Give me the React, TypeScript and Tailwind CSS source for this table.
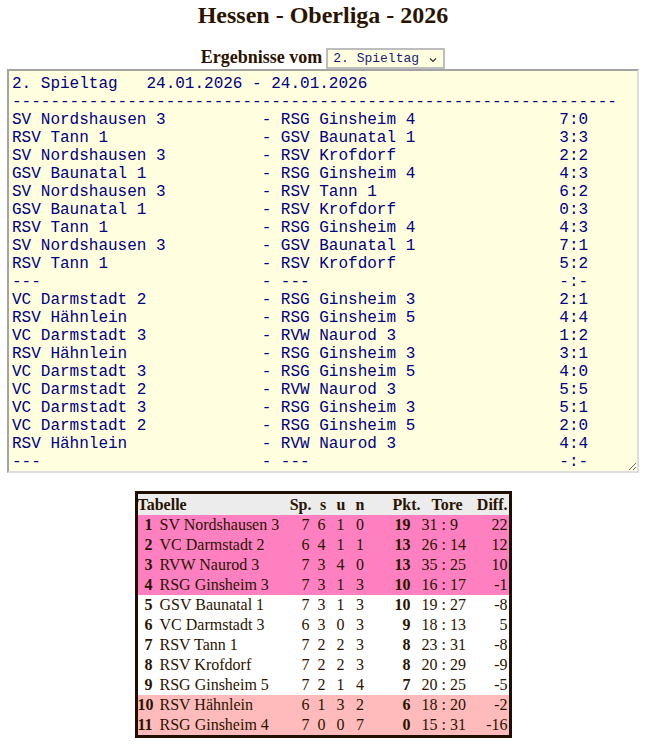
import React from "react";

const pad = (s: string, n: number) => s + " ".repeat(Math.max(0, n - s.length));

const matches: [string, string, string][] = [
  ["SV Nordshausen 3", "RSG Ginsheim 4", "7:0"],
  ["RSV Tann 1", "GSV Baunatal 1", "3:3"],
  ["SV Nordshausen 3", "RSV Krofdorf", "2:2"],
  ["GSV Baunatal 1", "RSG Ginsheim 4", "4:3"],
  ["SV Nordshausen 3", "RSV Tann 1", "6:2"],
  ["GSV Baunatal 1", "RSV Krofdorf", "0:3"],
  ["RSV Tann 1", "RSG Ginsheim 4", "4:3"],
  ["SV Nordshausen 3", "GSV Baunatal 1", "7:1"],
  ["RSV Tann 1", "RSV Krofdorf", "5:2"],
  ["---", "---", "-:-"],
  ["VC Darmstadt 2", "RSG Ginsheim 3", "2:1"],
  ["RSV Hähnlein", "RSG Ginsheim 5", "4:4"],
  ["VC Darmstadt 3", "RVW Naurod 3", "1:2"],
  ["RSV Hähnlein", "RSG Ginsheim 3", "3:1"],
  ["VC Darmstadt 3", "RSG Ginsheim 5", "4:0"],
  ["VC Darmstadt 2", "RVW Naurod 3", "5:5"],
  ["VC Darmstadt 3", "RSG Ginsheim 3", "5:1"],
  ["VC Darmstadt 2", "RSG Ginsheim 5", "2:0"],
  ["RSV Hähnlein", "RVW Naurod 3", "4:4"],
  ["---", "---", "-:-"],
];

const text = [
  "2. Spieltag   24.01.2026 - 24.01.2026",
  "-".repeat(63),
  ...matches.map(([a, b, c]) => pad(a, 26) + "- " + pad(b, 29) + c),
].join("\n");

type Row = [number, string, number, number, number, number, number, string, number, string];
const rows: Row[] = [
  [1, "SV Nordshausen 3", 7, 6, 1, 0, 19, "31 : 9", 22, "bg-[#ff80c0]"],
  [2, "VC Darmstadt 2", 6, 4, 1, 1, 13, "26 : 14", 12, "bg-[#ff80c0]"],
  [3, "RVW Naurod 3", 7, 3, 4, 0, 13, "35 : 25", 10, "bg-[#ff80c0]"],
  [4, "RSG Ginsheim 3", 7, 3, 1, 3, 10, "16 : 17", -1, "bg-[#ff80c0]"],
  [5, "GSV Baunatal 1", 7, 3, 1, 3, 10, "19 : 27", -8, "bg-white"],
  [6, "VC Darmstadt 3", 6, 3, 0, 3, 9, "18 : 13", 5, "bg-white"],
  [7, "RSV Tann 1", 7, 2, 2, 3, 8, "23 : 31", -8, "bg-white"],
  [8, "RSV Krofdorf", 7, 2, 2, 3, 8, "20 : 29", -9, "bg-white"],
  [9, "RSG Ginsheim 5", 7, 2, 1, 4, 7, "20 : 25", -5, "bg-white"],
  [10, "RSV Hähnlein", 6, 1, 3, 2, 6, "18 : 20", -2, "bg-[#ffbbbb]"],
  [11, "RSG Ginsheim 4", 7, 0, 0, 7, 0, "15 : 31", -16, "bg-[#ffbbbb]"],
];

export default function App() {
  return (
    <div className="min-h-screen bg-white text-[#2a1400] font-['Liberation_Serif','Times_New_Roman',serif]">
      <h2 className="pt-[1px] text-center text-[24px] font-bold leading-[28px]">Hessen - Oberliga - 2026</h2>
      <div className="mt-[19px] flex h-[21px] items-center justify-center gap-[4px]">
        <span className="mt-[-3px] text-[18px] font-bold leading-[20px]">Ergebnisse vom</span>
        <div className="flex h-[21px] w-[119px] items-center justify-between border-2 border-[#bdbdbd] bg-[#ffffe0] pl-[5px] pr-[6px] font-['Liberation_Mono','Courier_New',monospace] text-[13px] text-[#1a1a80]">
          <span>2. Spieltag</span>
          <svg width="8" height="6" viewBox="0 0 8 6" className="mt-[2px]">
            <polyline points="1,1.5 4,4.5 7,1.5" fill="none" stroke="#333" strokeWidth="1.2" />
          </svg>
        </div>
      </div>
      <textarea
        readOnly
        value={text}
        className="mx-auto block h-[404px] w-[632px] overflow-hidden whitespace-pre border-2 border-t-[#a3a3a3] border-l-[#a3a3a3] border-r-[#dedede] border-b-[#dedede] bg-[#ffffe0] pt-[4px] pb-0 pr-[2px] pl-[3px] font-['Liberation_Mono','Courier_New',monospace] text-[16px] leading-[18px] text-[#000080] outline-none"
      />
      <div className="mx-auto mt-[18px] w-[377px] border-[3px] border-[#1e0f00]">
        <table className="w-full table-fixed border-collapse text-[16px] leading-[20px]">
          <colgroup>
            <col className="w-[18px]" />
            <col className="w-[131px]" />
            <col className="w-[26px]" />
            <col className="w-[18px]" />
            <col className="w-[20px]" />
            <col className="w-[19px]" />
            <col className="w-[51px]" />
            <col className="w-[53px]" />
            <col className="w-[35px]" />
          </colgroup>
          <thead>
            <tr className="bg-[#ececec] font-bold leading-[21px]">
              <th colSpan={2} className="p-0 text-left font-bold">Tabelle</th>
              <th className="p-0 pr-[1px] text-right font-bold">Sp.</th>
              <th className="p-0 pl-[3px] text-center font-bold">s</th>
              <th className="p-0 pl-[1px] text-center font-bold">u</th>
              <th className="p-0 text-center font-bold">n</th>
              <th className="p-0 text-right font-bold">Pkt.</th>
              <th className="p-0 text-center font-bold">Tore</th>
              <th className="p-0 pr-[1px] text-right font-bold">Diff.</th>
            </tr>
          </thead>
          <tbody>
            {rows.map((r) => (
              <tr key={r[0]} className={r[9]}>
                <td className="p-0 pr-[3px] text-right font-bold whitespace-nowrap">{r[0]}</td>
                <td className="p-0 pl-[4px] whitespace-nowrap">{r[1]}</td>
                <td className="p-0 pr-[3px] text-right">{r[2]}</td>
                <td className="p-0 text-center">{r[3]}</td>
                <td className="p-0 text-center">{r[4]}</td>
                <td className="p-0 text-center">{r[5]}</td>
                <td className="p-0 pr-[10px] text-right font-bold">{r[6]}</td>
                <td className="p-0 pl-[1px] text-left whitespace-nowrap">{r[7]}</td>
                <td className="p-0 pr-[1px] text-right">{r[8]}</td>
              </tr>
            ))}
          </tbody>
        </table>
      </div>
    </div>
  );
}
